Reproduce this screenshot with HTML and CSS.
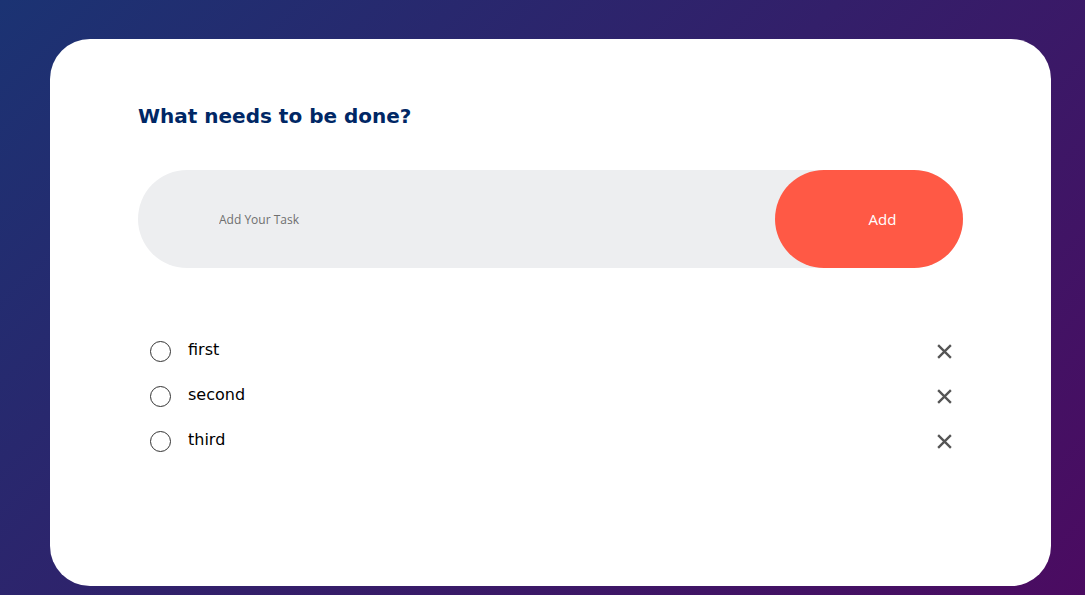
FILE: index.html
```html
<!DOCTYPE html>
<html>
<head>
<meta charset="utf-8">
<link rel="stylesheet" href="styles.css">
</head>
<body>
<div class="card">
  <h2 class="title">What needs to be done?</h2>
  <div class="row">
    <input class="task-input" type="text" placeholder="Add Your Task">
    <button class="add-btn">Add</button>
  </div>
  <ul class="list">
    <li class="item"><span class="circle"></span><span class="label">first</span><svg class="close" viewBox="0 0 16 16"><path d="M2 2L14 14M14 2L2 14"/></svg></li>
    <li class="item"><span class="circle"></span><span class="label">second</span><svg class="close" viewBox="0 0 16 16"><path d="M2 2L14 14M14 2L2 14"/></svg></li>
    <li class="item"><span class="circle"></span><span class="label">third</span><svg class="close" viewBox="0 0 16 16"><path d="M2 2L14 14M14 2L2 14"/></svg></li>
  </ul>
</div>
</body>
</html>
```
FILE: styles.css
```css
* { box-sizing: border-box; }
html, body { height: 100%; }
body {
  margin: 0;
  padding: 39px 34px 0 50px;
  background: linear-gradient(135deg, #1b3373, #4b0b61);
  font-family: "DejaVu Sans", sans-serif;
  overflow: hidden;
}
.card {
  width: 1001px;
  height: 547px;
  background: #fff;
  border-radius: 40px;
  padding: 61px 88px 0 88px;
}
.title {
  margin: 0;
  color: #002765;
  font-size: 20px;
  font-weight: bold;
  line-height: 32px;
}
.row {
  display: flex;
  margin-top: 38px;
  height: 98px;
  background: #edeef0;
  border-radius: 49px;
}
.task-input {
  flex: 1;
  border: none;
  outline: none;
  background: transparent;
  padding-left: 81px;
  font-family: "Open Sans", sans-serif;
  font-size: 12px;
  color: #555;
}
.task-input::placeholder { color: #6f6f6f; }
.add-btn {
  width: 188px;
  border: none;
  border-radius: 49px;
  background: #ff5945;
  color: #fff;
  font-family: "Open Sans", sans-serif;
  font-size: 15px;
  padding: 0 0 0 27px;
}
.list {
  list-style: none;
  margin: 59px 0 0;
  padding: 0;
}
.item {
  display: flex;
  align-items: center;
  height: 45px;
  padding-left: 12px;
  padding-right: 10px;
}
.circle {
  width: 21px;
  height: 21px;
  border: 1px solid #333;
  border-radius: 50%;
  margin-top: 4px;
}
.label {
  flex: 1;
  margin-left: 17px;
  font-size: 16px;
  color: #000;
}
.close {
  width: 17px;
  height: 17px;
  margin-top: 4px;
  stroke: #555;
  stroke-width: 2.2;
  fill: none;
}
```
